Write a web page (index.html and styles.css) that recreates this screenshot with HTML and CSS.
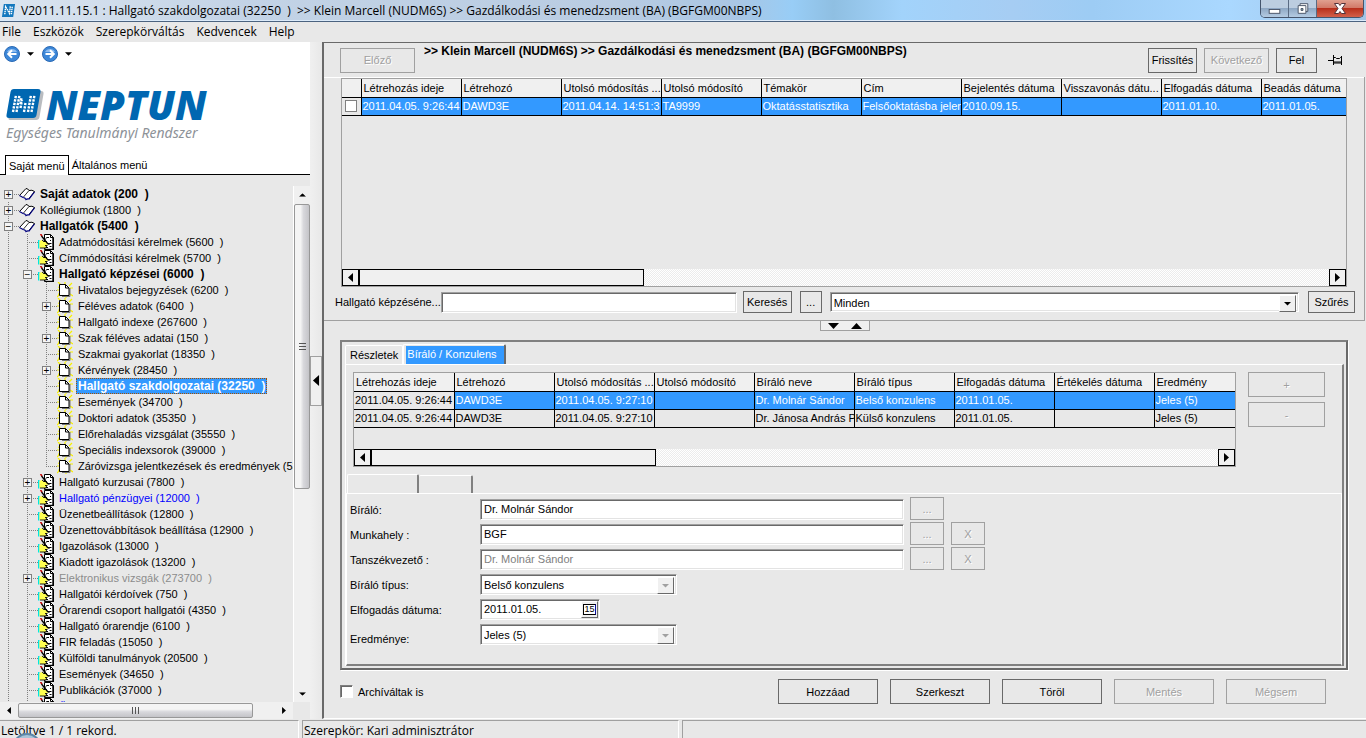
FILE: index.html
```html
<!DOCTYPE html>
<html lang="hu">
<head>
<meta charset="utf-8">
<title>V2011.11.15.1 : Hallgató szakdolgozatai</title>
<link rel="stylesheet" href="styles.css">
</head>
<body>
<svg class="defs" aria-hidden="true">
  <symbol id="book" viewBox="0 0 16 16">
    <path d="M.500 9.500L7 2.500l3 1.500 5.500 1.500L10 13l-3-1.500z" fill="#fff"/>
    <path d="M.500 9.500L7 2.500q2 0 3 2 3-1 5.500 1L10 12.500" fill="none" stroke="#000"/>
    <path d="M10 4.500L4.500 11" fill="none" stroke="#000" stroke-width=".8"/>
    <path d="M.500 9.500l3.500 2q2 0 3 2 1.500-1 3-.5l5.500-7" fill="none" stroke="#000080" stroke-width="1.200"/>
  </symbol>
  <symbol id="edit" viewBox="0 0 16 16">
    <path d="M6.500 .500h6l3 3v12h-9z" fill="#fff" stroke="#000"/>
    <path d="M12.500 .500v3h3" fill="none" stroke="#000"/>
    <path d="M15 4v12M7 15.500h9" stroke="#000" stroke-width="1.400"/>
    <path d="M9 3.500h2M12 6.500h1M12 9.500h1.500M8 13.500h2M11.500 12.500h2" stroke="#000"/>
    <path d="M0 6h1.500v8.500H0z" fill="#00e5e5"/>
    <path d="M1.500 7L4 6l2 1.500 4 1v2l-1.500 1-.5 2.500H1.500z" fill="#ffff50"/>
    <path d="M4 6l2 1.500h3M9 9.500h3M7 11.500h2.500M2 14h6l.5-2" fill="none" stroke="#000" stroke-width=".9"/>
    <path d="M3.500 2l6 7.500 2 1" fill="none" stroke="#000" stroke-width="1.300"/>
    <path d="M9 3L5.500 8" fill="none" stroke="#000" stroke-width=".8"/>
    <path d="M2.500 0l1.500 2" stroke="#c00000" stroke-width="1.500"/>
  </symbol>
  <symbol id="page" viewBox="0 0 16 16">
    <path d="M1 0l3 3M15 1l-3 3M0 8h3M16 6h-3M0 15l3-3M16 14l-3-2M8 0v2M9 16v-2M1 5l3 1M1 12h3" stroke="#f8f000" stroke-width="1.200"/>
    <path d="M13 6v8.500H5" fill="none" stroke="#777"/>
    <path d="M2.500 2.500h6l3.500 3.500v7.500H2.500z" fill="#fff" stroke="#000"/>
    <path d="M8.500 2.500v3.500H12" fill="none" stroke="#000"/>
  </symbol>
  <symbol id="left" viewBox="0 0 5 9"><path d="M5 0v9L0 4.500z"/></symbol>
  <symbol id="right" viewBox="0 0 5 9"><path d="M0 0v9l5-4.500z"/></symbol>
  <symbol id="down" viewBox="0 0 8 4"><path d="M0 0h8L4 4z"/></symbol>
  <symbol id="up" viewBox="0 0 8 4"><path d="M0 4h8L4 0z"/></symbol>
</svg>

<header class="titlebar">
  <svg class="app-icon" viewBox="0 0 16 16"><path d="M3 1h12l-2 14H1z" fill="#1478be"/><path d="M4 12l1-8 4 7 1-8M11 12l1-8" fill="none" stroke="#fff" stroke-width="1.500" stroke-dasharray="1.500 .7"/></svg>
  <h1 class="title">V2011.11.15.1 : Hallgató szakdolgozatai (32250&nbsp; )&nbsp; &gt;&gt; Klein Marcell (NUDM6S) &gt;&gt; Gazdálkodási és menedzsment (BA) (BGFGM00NBPS)</h1>
  <div class="window-buttons">
    <button class="wb" aria-label="Minimize"><svg viewBox="0 0 28 17"><rect x="8.500" y="9.500" width="11" height="4" fill="#fff" stroke="#4a5568"/></svg></button>
    <button class="wb" aria-label="Restore"><svg viewBox="0 0 28 17"><path d="M11.500 3.500h8v8h-8z" fill="#fff" stroke="#4a5568"/><path d="M9.500 5.500h8v8h-8z" fill="#fff" stroke="#4a5568"/><path d="M12.500 8.500h2v2h-2z" fill="#8aa" stroke="#4a5568"/></svg></button>
    <button class="wb close" aria-label="Close"><svg viewBox="0 0 46 17"><path d="M17.500 3.500h4l1.500 2 1.500-2h4l-3.500 5 3.500 5h-4l-1.500-2-1.500 2h-4l3.500-5z" fill="#fff" stroke="#53333a"/></svg></button>
  </div>
</header>

<nav class="menubar">
  <button>File</button><button>Eszközök</button><button>Szerepkörváltás</button><button>Kedvencek</button><button>Help</button>
</nav>

<main class="workspace">
  <aside class="sidebar">
    <div class="brand">
      <div class="history">
        <button aria-label="Vissza"><svg class="orb" viewBox="0 0 16 16"><circle cx="8" cy="8" r="7.500" fill="#3c87d8" stroke="#2a69b4"/><path d="M3 6a5.500 5 0 0 1 10 0z" fill="#8dbcf0"/><path d="M12.500 8H4.500M8 4.200L4.200 8 8 11.800" fill="none" stroke="#fff" stroke-width="2"/></svg></button>
        <svg class="caret"><use href="#down"/></svg>
        <button aria-label="Előre"><svg class="orb" viewBox="0 0 16 16"><circle cx="8" cy="8" r="7.500" fill="#3c87d8" stroke="#2a69b4"/><path d="M3 6a5.500 5 0 0 1 10 0z" fill="#8dbcf0"/><path d="M3.500 8h8M8 4.200L11.800 8 8 11.800" fill="none" stroke="#fff" stroke-width="2"/></svg></button>
        <svg class="caret"><use href="#down"/></svg>
      </div>
      <div class="logo">
        <svg viewBox="0 0 38 32">
          <path d="M9 2h26q3 0 2.500 3l-4 23q-.5 3-3.500 3H5q-3 0-2.500-2z" fill="#b9bcc0"/>
          <path d="M8 0h24q3 0 2.500 3l-4 23q-.5 3-3.500 3H3q-3 0-2.500-3l4-23Q5 0 8 0z" fill="#0067b1"/>
          <path d="M7 23l3-17M10.500 23l3-17M14.500 15l1-6M14.500 19l1.500-8M18 23l1.500-9M22 23l3-17M25.500 23l3-17" fill="none" stroke="#fff" stroke-width="2.400" stroke-dasharray="2.400 1.100"/>
        </svg>
        <span class="logo-name">NEPTUN</span>
      </div>
      <p class="slogan">Egységes Tanulmányi Rendszer</p>
      <div class="menu-tabs"><button class="on">Saját menü</button><button>Általános menü</button></div>
    </div>
    <div class="tree-area">
      <ul class="tree">
        <li><div class="row"><button class="ex">+</button><svg><use href="#book"/></svg><b>Saját adatok (200&nbsp; )</b></div></li>
        <li><div class="row"><button class="ex">+</button><svg><use href="#book"/></svg><span>Kollégiumok (1800&nbsp; )</span></div></li>
        <li><div class="row"><button class="ex">−</button><svg><use href="#book"/></svg><b>Hallgatók (5400&nbsp; )</b></div>
          <ul>
            <li><div class="row"><svg><use href="#edit"/></svg><span>Adatmódosítási kérelmek (5600&nbsp; )</span></div></li>
            <li><div class="row"><svg><use href="#edit"/></svg><span>Címmódosítási kérelmek (5700&nbsp; )</span></div></li>
            <li><div class="row"><button class="ex">−</button><svg><use href="#edit"/></svg><b>Hallgató képzései (6000&nbsp; )</b></div>
              <ul>
                <li><div class="row"><svg><use href="#page"/></svg><span>Hivatalos bejegyzések (6200&nbsp; )</span></div></li>
                <li><div class="row"><button class="ex">+</button><svg><use href="#page"/></svg><span>Féléves adatok (6400&nbsp; )</span></div></li>
                <li><div class="row"><svg><use href="#page"/></svg><span>Hallgató indexe (267600&nbsp; )</span></div></li>
                <li><div class="row"><button class="ex">+</button><svg><use href="#page"/></svg><span>Szak féléves adatai (150&nbsp; )</span></div></li>
                <li><div class="row"><svg><use href="#page"/></svg><span>Szakmai gyakorlat (18350&nbsp; )</span></div></li>
                <li><div class="row"><button class="ex">+</button><svg><use href="#page"/></svg><span>Kérvények (28450&nbsp; )</span></div></li>
                <li><div class="row"><svg><use href="#page"/></svg><b class="current">Hallgató szakdolgozatai (32250&nbsp; )</b></div></li>
                <li><div class="row"><svg><use href="#page"/></svg><span>Események (34700&nbsp; )</span></div></li>
                <li><div class="row"><svg><use href="#page"/></svg><span>Doktori adatok (35350&nbsp; )</span></div></li>
                <li><div class="row"><svg><use href="#page"/></svg><span>Előrehaladás vizsgálat (35550&nbsp; )</span></div></li>
                <li><div class="row"><svg><use href="#page"/></svg><span>Speciális indexsorok (39000&nbsp; )</span></div></li>
                <li class="end"><div class="row"><svg><use href="#page"/></svg><span>Záróvizsga jelentkezések és eredmények (538</span></div></li>
              </ul>
            </li>
            <li><div class="row"><button class="ex">+</button><svg><use href="#edit"/></svg><span>Hallgató kurzusai (7800&nbsp; )</span></div></li>
            <li><div class="row"><button class="ex">+</button><svg><use href="#edit"/></svg><span class="blue">Hallgató pénzügyei (12000&nbsp; )</span></div></li>
            <li><div class="row"><svg><use href="#edit"/></svg><span>Üzenetbeállítások (12800&nbsp; )</span></div></li>
            <li><div class="row"><svg><use href="#edit"/></svg><span>Üzenettovábbítások beállítása (12900&nbsp; )</span></div></li>
            <li><div class="row"><svg><use href="#edit"/></svg><span>Igazolások (13000&nbsp; )</span></div></li>
            <li><div class="row"><svg><use href="#edit"/></svg><span>Kiadott igazolások (13200&nbsp; )</span></div></li>
            <li><div class="row"><button class="ex">+</button><svg><use href="#edit"/></svg><span class="grey">Elektronikus vizsgák (273700&nbsp; )</span></div></li>
            <li><div class="row"><svg><use href="#edit"/></svg><span>Hallgatói kérdoívek (750&nbsp; )</span></div></li>
            <li><div class="row"><svg><use href="#edit"/></svg><span>Órarendi csoport hallgatói (4350&nbsp; )</span></div></li>
            <li><div class="row"><svg><use href="#edit"/></svg><span>Hallgató órarendje (6100&nbsp; )</span></div></li>
            <li><div class="row"><svg><use href="#edit"/></svg><span>FIR feladás (15050&nbsp; )</span></div></li>
            <li><div class="row"><svg><use href="#edit"/></svg><span>Külföldi tanulmányok (20500&nbsp; )</span></div></li>
            <li><div class="row"><svg><use href="#edit"/></svg><span>Események (34650&nbsp; )</span></div></li>
            <li><div class="row"><svg><use href="#edit"/></svg><span>Publikációk (37000&nbsp; )</span></div></li>
            <li><div class="row"><svg><use href="#edit"/></svg><span class="blue">Üzenetek (37250&nbsp; )</span></div></li>
          </ul>
        </li>
      </ul>
      <div class="vbar">
        <button aria-label="Fel"><svg viewBox="0 0 8 4"><use href="#up"/></svg></button>
        <div class="vthumb"><i></i></div>
        <button aria-label="Le"><svg viewBox="0 0 8 4"><use href="#down"/></svg></button>
      </div>
    </div>
    <div class="hbar">
      <button aria-label="Balra"><svg><use href="#left"/></svg></button>
      <div class="hthumb"><i></i></div>
      <button aria-label="Jobbra"><svg><use href="#right"/></svg></button>
    </div>
  </aside>

  <div class="splitter"><button aria-label="Menü elrejtése"><svg><use href="#left"/></svg></button></div>

  <section class="content">
    <div class="toolbar">
      <button class="btn prev" disabled>Előző</button>
      <strong class="crumb">&gt;&gt; Klein Marcell (NUDM6S) &gt;&gt; Gazdálkodási és menedzsment (BA) (BGFGM00NBPS)</strong>
      <button class="btn refresh">Frissítés</button>
      <button class="btn next" disabled>Következő</button>
      <button class="btn upper">Fel</button>
      <button class="pin" aria-label="Rögzítés"><svg viewBox="0 0 15 10"><path d="M0 5.500h5" stroke="#000"/><path d="M5.500 0v10M13.500 1v9M6 2.500h1.500l1 1h3l1-1H14M6 8h8M6 7h8" fill="none" stroke="#000"/></svg></button>
    </div>

    <div class="upper-panel">
      <div class="grid main-grid">
        <table>
          <colgroup><col class="c-check"><col><col><col><col><col><col><col><col><col><col class="c-rest"></colgroup>
          <thead><tr><th></th><th>Létrehozás ideje</th><th>Létrehozó</th><th>Utolsó módosítás ...</th><th>Utolsó módosító</th><th>Témakör</th><th>Cím</th><th>Bejelentés dátuma</th><th>Visszavonás dátu...</th><th>Elfogadás dátuma</th><th>Beadás dátuma</th></tr></thead>
          <tbody><tr class="sel"><td class="plain"><input type="checkbox" aria-label="Sor kijelölése"></td><td>2011.04.05. 9:26:44</td><td>DAWD3E</td><td>2011.04.14. 14:51:3</td><td>TA9999</td><td>Oktatásstatisztika</td><td>Felsőoktatásba jelen</td><td>2010.09.15.</td><td></td><td>2011.01.10.</td><td>2011.01.05.</td></tr></tbody>
        </table>
        <div class="flatbar"><button aria-label="Balra"><svg><use href="#left"/></svg></button><div class="thumb"></div><button class="last" aria-label="Jobbra"><svg><use href="#right"/></svg></button></div>
      </div>
      <div class="search">
        <label for="q">Hallgató képzéséne...</label>
        <input id="q" class="field" type="text">
        <button class="btn find">Keresés</button>
        <button class="btn dots">...</button>
        <span class="select wide"><select aria-label="Szűrő"><option>Minden</option></select><svg viewBox="0 0 15 15"><path d="M4 6h7L7.500 9.500z"/></svg></span>
        <button class="btn filter">Szűrés</button>
      </div>
    </div>

    <div class="divider"><button aria-label="Panel méretezése"><svg viewBox="0 0 34 6"><path d="M0 0h11L5.500 6z"/><path d="M23 6h11L28.500 0z"/></svg></button></div>

    <div class="details">
      <div class="tabs"><button>Részletek</button><button class="on"><span>Bíráló / Konzulens</span></button></div>
      <div class="tab-body">
        <div class="grid-row">
          <div class="grid sub-grid">
            <table>
              <colgroup><col><col><col><col><col><col><col><col><col class="c-rest"></colgroup>
              <thead><tr><th>Létrehozás ideje</th><th>Létrehozó</th><th>Utolsó módosítás ...</th><th>Utolsó módosító</th><th>Bíráló neve</th><th>Bíráló típus</th><th>Elfogadás dátuma</th><th>Értékelés dátuma</th><th>Eredmény</th></tr></thead>
              <tbody>
                <tr class="sel"><td class="plain">2011.04.05. 9:26:44</td><td>DAWD3E</td><td>2011.04.05. 9:27:10</td><td></td><td>Dr. Molnár Sándor</td><td>Belső konzulens</td><td>2011.01.05.</td><td></td><td>Jeles (5)</td></tr>
                <tr><td>2011.04.05. 9:26:44</td><td>DAWD3E</td><td>2011.04.05. 9:27:10</td><td></td><td>Dr. Jánosa András P</td><td>Külső konzulens</td><td>2011.01.05.</td><td></td><td>Jeles (5)</td></tr>
              </tbody>
            </table>
            <div class="flatbar"><button aria-label="Balra"><svg><use href="#left"/></svg></button><div class="thumb"></div><button class="last" aria-label="Jobbra"><svg><use href="#right"/></svg></button></div>
          </div>
          <div class="side-buttons"><button class="btn" disabled>+</button><button class="btn" disabled>-</button></div>
        </div>
        <div class="subtabs"><span class="first"></span><span></span></div>
        <form class="form">
          <label for="f1">Bíráló:</label><div class="ctl"><input id="f1" class="field" type="text" value="Dr. Molnár Sándor"><button type="button" class="btn" disabled>...</button></div>
          <label for="f2">Munkahely :</label><div class="ctl"><input id="f2" class="field" type="text" value="BGF"><button type="button" class="btn" disabled>...</button><button type="button" class="btn" disabled>X</button></div>
          <label for="f3">Tanszékvezető :</label><div class="ctl"><input id="f3" class="field" type="text" value="Dr. Molnár Sándor" disabled><button type="button" class="btn" disabled>...</button><button type="button" class="btn" disabled>X</button></div>
          <label for="f4">Bíráló típus:</label><div class="ctl"><span class="select off"><select id="f4"><option>Belső konzulens</option></select><svg viewBox="0 0 15 15"><path d="M4 6h7L7.500 9.500z"/></svg></span></div>
          <label for="f5">Elfogadás dátuma:</label><div class="ctl"><span class="date"><input id="f5" class="field" type="text" value="2011.01.05."><button type="button" aria-label="Naptár"><span>15</span></button></span></div>
          <label for="f6" class="low">Eredménye:</label><div class="ctl"><span class="select off"><select id="f6"><option>Jeles (5)</option></select><svg viewBox="0 0 15 15"><path d="M4 6h7L7.500 9.500z"/></svg></span></div>
        </form>
      </div>
    </div>

    <div class="actions">
      <label><input type="checkbox"> Archíváltak is</label>
      <button class="btn">Hozzáad</button><button class="btn">Szerkeszt</button><button class="btn">Töröl</button><button class="btn" disabled>Mentés</button><button class="btn" disabled>Mégsem</button>
    </div>
  </section>
</main>

<footer class="status"><span>Letöltve 1 / 1 rekord.</span><span>Szerepkör: Kari adminisztrátor</span><span></span><i class="start-orb"></i></footer>
</body>
</html>
```
FILE: styles.css
```css
* { box-sizing: border-box; }
body {
  margin: 0; height: 100vh; display: flex; flex-direction: column; overflow: hidden;
  background: #e8e8e8; color: #000; font: 11px/16px "Liberation Sans", Arial, sans-serif;
}
button, input, select { font: inherit; color: inherit; margin: 0; padding: 0; border: 0; border-radius: 0; background: none; }
ul { list-style: none; margin: 0; padding: 0; }
.defs { display: none; }

/* title bar and menu */
.titlebar {
  flex: none; height: 22px; display: flex; align-items: center; gap: 5px; padding: 0 2px 0 1px;
  border-bottom: 1px solid #4b6380; box-shadow: inset 0 -1px #dcebfa;
  background: linear-gradient(90deg, #dbe5f0 0, #c3d3e6 18%, #b9cce2 45%, #a9c6e4 54%, #98cdf6 58%, #8fbfe2 61%, #a2d3fb 66%, #a6cdf3 74%, #9dccf4 80%, #aad8ff 90%, #a2c4e6 100%);
}
.app-icon { width: 15px; height: 15px; }
.title { margin: 0; flex: 1; font: 12px/20px "Open Sans", sans-serif; white-space: nowrap; }
.window-buttons { align-self: flex-start; display: flex; border: 1px solid #44546c; border-top: 0; border-radius: 0 0 5px 5px; overflow: hidden; }
.wb { width: 28px; height: 17px; border-right: 1px solid #5a6b83; background: linear-gradient(#bccde0 45%, #8fa8c4 50%, #b4cbe2); }
.wb svg { display: block; width: 100%; height: 17px; }
.wb.close { width: 46px; border: 0; background: linear-gradient(#e0a08f 0, #d27a68 45%, #b8301c 50%, #d2604a); }
.menubar { flex: none; height: 20px; display: flex; gap: 12px; padding-left: 2px; font: 12px/20px "Open Sans", sans-serif; }

.workspace { flex: 1; min-height: 0; display: flex; }

/* left side */
.sidebar { flex: none; width: 310px; display: flex; flex-direction: column; }
.brand { background: #fff; }
.history { display: flex; align-items: center; padding: 4px 4px 2px; height: 22px; }
.history button { height: 16px; }
.orb { width: 16px; height: 16px; display: block; }
.caret { width: 7px; height: 4px; margin: 0 8px 0 7px; }
.logo { display: flex; height: 40px; margin: 21px 0 0 6px; gap: 2px; align-items: center; color: #0067b1; }
.logo svg { width: 38px; height: 32px; }
.logo-name { font: italic 800 40px/40px "Open Sans", sans-serif; }
.slogan { margin: 0 0 0 6px; height: 30px; color: #8d9298; font: italic 14px/16px "Noto Sans", sans-serif; }
.menu-tabs { display: flex; height: 20px; border-bottom: 1px solid #000; padding-left: 5px; }
.menu-tabs button { height: 20px; padding: 0 3px; }
.menu-tabs .on { border: 1px solid #000; border-bottom: 0; background: #fff; }
.tree-area { flex: 1; min-height: 0; display: flex; padding-top: 11px; }
.tree { flex: 1; min-width: 0; overflow: hidden; }
.tree li { background: linear-gradient(#808080 50%, transparent 50%) 8px 0 / 1px 2px repeat-y; }
.tree > li:first-child { background-position-y: 8px; background-repeat: no-repeat; }
.tree li.end { background: repeating-linear-gradient(#808080 0 1px, transparent 1px 2px) 8px 0 / 1px 8px no-repeat; }
.tree ul { margin-left: 19px; }
.row { height: 16px; display: flex; align-items: center; padding-left: 19px; white-space: nowrap; }
.row::before { content: ""; flex: none; width: 11px; height: 1px; margin-left: -11px; background: repeating-linear-gradient(90deg, #808080 0 1px, transparent 1px 2px); }
.row svg { flex: none; width: 16px; height: 16px; margin-right: 3px; }
.row b, .row span { padding: 0 2px; line-height: 16px; }
.row b { font-size: 12px; }
.row .current { color: #fff; background: #39f; outline: 1px dotted #a65000; outline-offset: -1px; }
.row .blue { color: #00f; }
.row .grey { color: #8c8c8c; }
.ex { flex: none; width: 9px; height: 9px; margin: 0 6px 0 -15px; border: 1px solid #808080; background: #f4f4f4; font-size: 10px; line-height: 7px; text-align: center; }
.vbar { width: 17px; display: flex; flex-direction: column; background: #f0f0f0; border-left: 1px solid #fff; }
.vbar button { height: 17px; display: flex; align-items: center; justify-content: center; }
.vbar button svg { width: 7px; height: 4px; }
.vbar button:last-child { margin-top: auto; }
.vthumb, .hthumb { display: flex; align-items: center; justify-content: center; border: 1px solid #989898; border-radius: 2px; }
.vthumb { flex: 0 1 285px; margin-top: 1px; background: linear-gradient(90deg, #f4f4f4 40%, #d8d8dc 60%, #c4c4c8); }
.vthumb i { width: 7px; height: 7px; background: repeating-linear-gradient(#555 0 1px, transparent 1px 3px); }
.hbar { flex: none; display: flex; width: 293px; height: 17px; background: #f0f0f0; }
.hbar button { width: 18px; display: flex; align-items: center; justify-content: center; }
.hbar button:last-child { margin-left: auto; }
.hbar svg { width: 4px; height: 7px; }
.hthumb { flex: 0 1 235px; height: 15px; margin-top: 1px; background: linear-gradient(#f4f4f4 40%, #d8d8dc 60%, #c4c4c8); }
.hthumb i { width: 7px; height: 7px; background: repeating-linear-gradient(90deg, #555 0 1px, transparent 1px 3px); }

.splitter { flex: none; width: 12px; display: flex; align-items: center; background: linear-gradient(90deg, #f0f0f0, #e8e8e8); }
.splitter button { width: 12px; height: 50px; border: 1px solid #a0a0a0; background: #f0f0f0; display: flex; align-items: center; justify-content: center; }
.splitter svg { width: 8px; height: 11px; }

/* shared controls */
.btn { flex: none; height: 25px; border: 1px solid #696969; padding: 0; text-align: center; }
.btn:disabled { border-color: #a0a0a0; color: #a0a0a0; text-shadow: 1px 1px #fff; }
.field, .select { border: 1px solid; border-color: #a0a0a0 #fff #fff #a0a0a0; box-shadow: inset 1px 1px #696969, inset -1px -1px #e3e3e3; background: #fff; }
.field { min-width: 0; height: 21px; padding: 0 3px 1px; }
.field:disabled { color: #808080; }
.select { display: flex; height: 21px; padding: 2px; }
.select select { flex: 1; min-width: 0; appearance: none; padding-left: 1px; outline: 0; }
.select svg { flex: none; width: 17px; height: 17px; background: #f0f0f0; border: 1px solid; border-color: #fff #696969 #696969 #fff; }
.select.off svg { fill: #a0a0a0; }
input[type=checkbox] { appearance: none; flex: none; width: 13px; height: 13px; background: #fff; border: 1px solid; border-color: #808080 #fff #fff #808080; box-shadow: inset 1px 1px #696969; }

/* right side */
.content { flex: 1; min-width: 0; display: flex; flex-direction: column; border-left: 2px solid #696969; border-top: 1px solid #696969; border-bottom: 1px solid #fff; }
.toolbar { flex: none; display: flex; align-items: center; height: 34px; padding: 0 23px 0 16px; }
.prev { width: 75px; }
.crumb { flex: 1; align-self: flex-start; margin: 0 9px; font-size: 12px; line-height: 16px; white-space: nowrap; overflow: hidden; }
.refresh { width: 49px; }
.next { width: 65px; margin: 0 7px; }
.upper { width: 41px; margin-right: 11px; }
.pin { height: 10px; }
.pin svg { display: block; width: 15px; height: 10px; }
.upper-panel { flex: 1; min-height: 0; display: flex; flex-direction: column; margin-right: 1px; border: 1px solid #a0a0a0; border-width: 0 1px 1px 0; box-shadow: inset 0 1px #fff; padding: 1px 9px 7px 11px; }
.grid { display: flex; flex-direction: column; border: 1px solid #a0a0a0; min-width: 0; }
.main-grid { flex: 1; margin: 0 8px 4px 6px; }
.grid table { width: 100%; table-layout: fixed; border-collapse: collapse; }
.grid col { width: 100px; }
.grid .c-check { width: 19px; }
.grid .c-rest { width: auto; }
.grid th, .grid td { height: 18px; padding: 0 0 0 1px; border: 1px solid #000; line-height: 16px; text-align: left; font-weight: normal; white-space: nowrap; overflow: hidden; }
.grid th { background: #f0f0f0; padding-left: 2px; }
.grid tr > :first-child { border-left: 0; }
.grid tr > :last-child { border-right: 0; }
.grid thead th { border-top: 0; }
.sel td { background: #39f; color: #fff; }
.sel td.plain { background: #e8e8e8; color: #000; }
.grid td input { display: block; margin-left: 2px; width: 12px; height: 12px; box-shadow: none; border-color: #808080; }
.flatbar { display: flex; height: 17px; margin-top: auto; background: conic-gradient(#fff 25%, #ececec 0 50%, #fff 0 75%, #ececec 0) 0 0 / 2px 2px; }
.flatbar button { width: 17px; border: 1px solid #000; background: #f0f0f0; display: flex; align-items: center; justify-content: center; }
.flatbar svg { width: 5px; height: 9px; }
.flatbar .last { margin-left: auto; }
.thumb { flex: 0 1 285px; border: 1px solid #000; background: #f0f0f0; }
.search { flex: none; display: flex; align-items: center; height: 22px; }
.search label { width: 106px; white-space: nowrap; }
.search .field { flex: 293 1 0; margin-right: 6px; }
.search .btn { height: 22px; }
.find { width: 49px; }
.dots { width: 22px; margin: 0 8px; }
.wide { flex: 472 1 0; margin-right: 9px; height: 20px; }
.filter { width: 47px; }
.divider { flex: none; height: 19px; display: flex; justify-content: center; align-items: flex-start; }
.divider button { width: 50px; height: 10px; border: 1px solid #a0a0a0; border-top: 0; background: #f0f0f0; }
.divider svg { display: block; width: 34px; height: 6px; margin: 0 auto; }

.details { flex: none; margin: 0 18px 0 16px; padding: 2px 2px 2px 3px; border: 2px solid; border-color: #808080 #696969 #696969 #808080; box-shadow: 1px 1px #fff; }
.tabs { display: flex; align-items: flex-end; height: 20px; }
.tabs button { height: 19px; padding: 0 4px; border: 1px solid #fff; border-bottom: 0; border-radius: 2px 2px 0 0; }
.tabs .on { height: 20px; padding: 0 0 0 2px; border-right: 2px solid #696969; display: flex; }
.tabs .on span { margin-top: 1px; padding: 0 7px 2px 1px; background: #39f; color: #fff; line-height: 17px; }
.tab-body { border-top: 1px solid #fff; border-right: 2px solid #808080; border-left: 1px solid #fff; }
.grid-row { display: flex; padding: 7px 17px 7px 7px; gap: 12px; }
.sub-grid { flex: 1; height: 95px; }
.side-buttons { display: flex; flex-direction: column; gap: 5px; }
.side-buttons .btn { width: 77px; }
.subtabs { display: flex; align-items: flex-end; height: 19px; padding-left: 1px; }
.subtabs span { width: 54px; height: 18px; border-top: 1px solid #fff; border-right: 2px solid #808080; border-radius: 2px 2px 0 0; }
.subtabs .first { width: 72px; height: 19px; border-left: 1px solid #fff; }
.form { display: grid; grid-template-columns: 130px 1fr; grid-auto-rows: 25px; padding: 3px 0 17px 3px; border: 1px solid #fff; border-bottom: 2px solid #808080; }
.form > label { line-height: 16px; padding-top: 5px; }
.form > .low { padding-top: 9px; }
.ctl { display: flex; align-items: flex-start; padding-top: 2px; }
.ctl > .field { flex: 0 1 424px; }
.ctl .btn { width: 34px; height: 23px; margin: -2px 0 0 7px; }
.ctl > .field + .btn { margin-left: 6px; }
.ctl .select { width: 197px; }
.date { position: relative; display: flex; width: 120px; }
.date .field { width: 120px; }
.date button { position: absolute; right: 2px; top: 2px; width: 17px; height: 17px; background: #f0f0f0; border: 1px solid; border-color: #fff #696969 #696969 #fff; display: flex; align-items: center; justify-content: center; }
.date button span { border: 1px solid #000; border-right-color: #1010a0; background: #fff; font-size: 9px; line-height: 9px; }

.actions { flex: none; display: flex; align-items: center; gap: 12px; padding: 9px 40px 14px 16px; }
.actions label { flex: 1; display: flex; align-items: center; gap: 5px; }
.actions .btn { width: 100px; }

.status { position: relative; flex: none; height: 19px; padding-top: 1px; display: flex; gap: 3px; font: 12px/20px "Open Sans", sans-serif; overflow: hidden; }
.status span { border: 1px solid #a0a0a0; border-right-color: #fff; border-bottom: 0; padding-left: 1px; width: 377px; white-space: nowrap; }
.status span:first-child { width: 299px; border-left: 0; }
.status span:nth-child(3) { flex: 1; border-right: 0; }
.start-orb { position: absolute; left: 12px; top: 14px; width: 30px; height: 30px; border-radius: 50%; border: 2px solid #5c87a8; background: #a9c4d8; }
```
